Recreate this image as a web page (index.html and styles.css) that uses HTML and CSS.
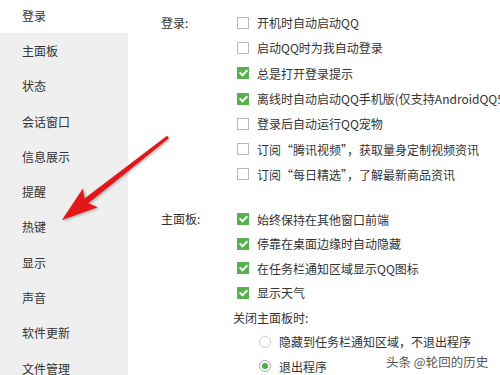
FILE: index.html
```html
<!DOCTYPE html>
<html lang="zh">
<head>
<meta charset="utf-8">
<link rel="stylesheet" href="styles.css">
</head>
<body>
<div class="window">
  <nav class="sidebar">
    <div class="nav-item active">登录</div>
    <div class="nav-item">主面板</div>
    <div class="nav-item">状态</div>
    <div class="nav-item">会话窗口</div>
    <div class="nav-item">信息展示</div>
    <div class="nav-item">提醒</div>
    <div class="nav-item">热键</div>
    <div class="nav-item">显示</div>
    <div class="nav-item">声音</div>
    <div class="nav-item">软件更新</div>
    <div class="nav-item">文件管理</div>
  </nav>
  <main class="content">
    <section class="group group-login">
      <div class="group-label">登录:</div>
      <div class="options">
        <div class="row"><span class="cb"></span>开机时自动启动QQ</div>
        <div class="row"><span class="cb"></span>启动QQ时为我自动登录</div>
        <div class="row"><span class="cb checked"></span>总是打开登录提示</div>
        <div class="row"><span class="cb checked"></span>离线时自动启动QQ手机版(仅支持AndroidQQ5.0及以上版本)</div>
        <div class="row"><span class="cb"></span>登录后自动运行QQ宠物</div>
        <div class="row"><span class="cb"></span>订阅“腾讯视频”，获取量身定制视频资讯</div>
        <div class="row"><span class="cb"></span>订阅“每日精选”，了解最新商品资讯</div>
      </div>
    </section>
    <section class="group group-main">
      <div class="group-label">主面板:</div>
      <div class="options">
        <div class="row"><span class="cb checked"></span>始终保持在其他窗口前端</div>
        <div class="row"><span class="cb checked"></span>停靠在桌面边缘时自动隐藏</div>
        <div class="row"><span class="cb checked"></span>在任务栏通知区域显示QQ图标</div>
        <div class="row"><span class="cb checked"></span>显示天气</div>
        <div class="row sub-label">关闭主面板时:</div>
        <div class="row radio-row"><span class="radio"></span>隐藏到任务栏通知区域，不退出程序</div>
        <div class="row radio-row"><span class="radio selected"></span>退出程序</div>
      </div>
    </section>
  </main>
</div>
<div class="watermark">头条 @轮回的历史</div>
<svg class="arrow" width="500" height="375" viewBox="0 0 500 375">
  <polygon points="62,220 97.7,207.3 88.2,203.3 168.9,138.2 167.1,135.8 84.6,198.5 82.9,188.5" fill="#e3171a"/>
</svg>
</body>
</html>
```
FILE: styles.css
```css
html, body {
  margin: 0;
  padding: 0;
}
body {
  width: 500px;
  height: 375px;
  overflow: hidden;
  position: relative;
  background: #fff;
  font-family: "Noto Sans CJK SC", "Noto Sans", sans-serif;
  font-size: 12px;
  color: #333;
}
.window {
  display: flex;
  height: 375px;
}
.sidebar {
  width: 128px;
  flex: none;
  background: #efefef;
  display: flex;
  flex-direction: column;
}
.nav-item {
  height: 35.3px;
  line-height: 35.3px;
  padding-left: 22px;
  color: #333;
  white-space: nowrap;
  flex: none;
}
.nav-item.active {
  background: #fff;
  margin-top: -2.3px;
}
.content {
  flex: 1;
  padding-left: 33px;
  padding-top: 10px;
  white-space: nowrap;
  overflow: hidden;
}
.group {
  display: flex;
  --row: 25.3px;
}
.group-main {
  margin-top: 20px;
  --row: 24.5px;
}
.group-label {
  width: 76px;
  flex: none;
  height: var(--row);
  line-height: var(--row);
}
.options {
  display: flex;
  flex-direction: column;
}
.row {
  height: var(--row);
  display: flex;
  align-items: center;
}
.cb {
  width: 10px;
  height: 10px;
  border: 1px solid #b9b9b9;
  background: #fff;
  margin-right: 8px;
  flex: none;
  position: relative;
}
.cb.checked {
  background: #55b24d;
  border-color: #55b24d;
}
.cb.checked::after {
  content: "";
  position: absolute;
  left: 3px;
  top: 0px;
  width: 3px;
  height: 6px;
  border: solid #fff;
  border-width: 0 2px 2px 0;
  transform: rotate(45deg);
}
.sub-label {
  margin-left: -4px;
}
.radio-row {
  padding-left: 22px;
}
.radio {
  width: 10px;
  height: 10px;
  border: 1px solid #cfcfcf;
  border-radius: 50%;
  margin-right: 8px;
  flex: none;
  position: relative;
  background: #fff;
}
.radio.selected {
  border-color: #a8a8a8;
}
.radio.selected::after {
  content: "";
  position: absolute;
  left: 2px;
  top: 2px;
  width: 6px;
  height: 6px;
  border-radius: 50%;
  background: #4cae45;
}
.watermark {
  position: absolute;
  left: 386px;
  top: 352px;
  font-size: 12.5px;
  color: #555;
  text-shadow: 0 0 2px #fff, 0 0 2px #fff, 0 0 3px #fff;
  white-space: nowrap;
}
.arrow {
  position: absolute;
  left: 0;
  top: 0;
  pointer-events: none;
  filter: drop-shadow(1px 1px 1.5px rgba(0,0,0,0.35));
}
```
